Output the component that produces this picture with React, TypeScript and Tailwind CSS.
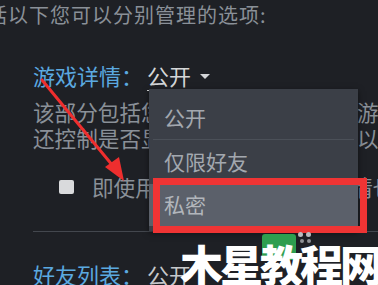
import React from "react";

const cjk = { fontFamily: '"Noto Sans CJK SC", "Noto Sans", sans-serif' };

function Arrow() {
  return (
    <svg className="absolute left-0 top-0 pointer-events-none" width="378" height="285" viewBox="0 0 378 285">
      <line x1="42" y1="80" x2="113" y2="166" stroke="#ee2e2e" strokeWidth="3" strokeLinecap="round" />
      <polygon points="124,181 105,167 119,157" fill="#ee2e2e" />
    </svg>
  );
}

function Dropdown() {
  return (
    <div className="absolute left-[149px] top-[89px] w-[209px] h-[142px] bg-[#3b3f47] pt-[8px] shadow-[0_2px_6px_rgba(0,0,0,0.5)]">
      <div className="h-[42px] flex items-center pl-[15px] text-[21px] text-[#a3a8af]">公开</div>
      <div className="mx-[4px] h-px bg-[#4b5058]" />
      <div className="h-[44px] flex items-center pl-[15px] text-[21px] text-[#a3a8af]">仅限好友</div>
      <div className="h-[42px] flex items-center pl-[15px] text-[21px] text-[#b2b6bc] bg-[#5b606a]">私密</div>
    </div>
  );
}

function Watermark() {
  return (
    <div className="absolute left-[180px] top-[234px] w-[200px] h-[60px] pointer-events-none">
      <div className="absolute left-[82px] top-0 w-[34px] h-[26px] rounded-[3px] bg-[#2e9e4f]" />
      <div className="absolute left-[118px] top-[-2px] flex flex-col gap-[2px]">
        <div className="flex gap-[3px]">
          <div className="w-[5px] h-[5px] rounded-full bg-[#b9bcc0]" />
          <div className="w-[5px] h-[5px] rounded-full bg-[#b9bcc0]" />
        </div>
        <div className="flex gap-[3px] ml-[2px]">
          <div className="w-[4px] h-[4px] rounded-full bg-[#8d9095]" />
          <div className="w-[4px] h-[4px] rounded-full bg-[#8d9095]" />
        </div>
      </div>
      <div className="absolute left-0 top-[3px] text-[43px] leading-[52px] font-black text-white tracking-[-3px] whitespace-nowrap">
        木星教程网
      </div>
    </div>
  );
}

export default function App() {
  return (
    <div className="relative w-[378px] h-[285px] overflow-hidden bg-[#1e2025]" style={cjk}>
      <div className="whitespace-nowrap">
        <p className="ml-[-13px] text-[20px] leading-[30px] text-[#8a9098] tracking-[1px]">括以下您可以分别管理的选项:</p>

        <div className="pl-[33px]">
          <div className="mt-[30px] flex items-center text-[22px] leading-[30px]">
            <span className="text-[#5ba9e0]">游戏详情：</span>
            <span className="ml-[4px] text-[#d4d6d8] underline underline-offset-[5px] decoration-1">公开</span>
            <svg className="ml-[9px] mt-[4px]" width="10" height="6" viewBox="0 0 10 6">
              <polygon points="0,0 10,0 5,5" fill="#d4d6d8" />
            </svg>
          </div>

          <div className="mt-[9px] text-[21.6px] leading-[26px] text-[#8a9098]">
            <p>该部分包括您的游戏列表、成就及游戏时间</p>
            <p>还控制是否显示您的游戏时间数据以及</p>
          </div>

          <div className="mt-[23px] pl-[26px] flex items-center gap-[18px] h-[26px]">
            <div className="w-[15px] h-[14px] rounded-[2px] bg-[#d9dadc] shrink-0" />
            <span className="text-[21.6px] text-[#8a9098]">即使用户已选择公开游戏详情也隐藏</span>
          </div>

          <div className="mt-[31px] h-px bg-[#43474e]" />

          <div className="mt-[29px] flex text-[22px] leading-[26px]">
            <span className="text-[#5ba9e0]">好友列表：</span>
            <span className="ml-[4px] text-[#c6c8cb]">公开</span>
          </div>
        </div>
      </div>

      <Dropdown />
      <div className="absolute left-[153px] top-[178px] w-[214px] h-[55px] border-[7px] border-[#ef3434]" />
      <Arrow />
      <Watermark />
    </div>
  );
}
